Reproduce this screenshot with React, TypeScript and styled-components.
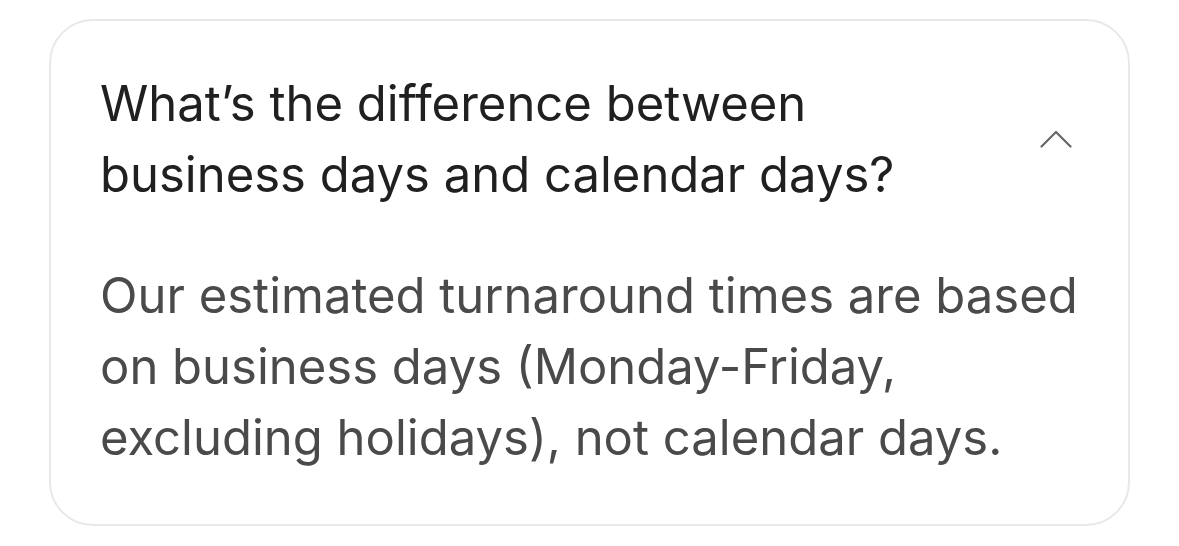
import React from "react";
import styled, { createGlobalStyle } from "styled-components";

const Global = createGlobalStyle`
  html, body { margin: 0; padding: 0; background: #ffffff; }
  body { font-family: Inter, "Noto Sans", sans-serif; }
`;

const Page = styled.div`
  padding: 19px 49px 20px 49px;
  box-sizing: border-box;
  width: 1179px;
  height: 546px;
`;

const Card = styled.section`
  box-sizing: border-box;
  height: 507px;
  border: 2px solid #e8e8e8;
  border-radius: 44px;
  background: #fff;
  padding: 47px 50px 0 49px;
  display: flex;
  flex-direction: column;
  gap: 50px;
`;

const Header = styled.div`
  display: flex;
  align-items: center;
  justify-content: space-between;
`;

const Question = styled.h3`
  margin: 0;
  font-size: 49px;
  line-height: 71px;
  font-weight: 400;
  color: #202020;
  white-space: nowrap;
`;

const Chevron = styled.svg`
  width: 32px;
  height: 18px;
  margin-right: 6px;
  flex-shrink: 0;
`;

const Answer = styled.p`
  margin: 0;
  font-size: 49px;
  line-height: 71px;
  color: #4a4a4a;
  white-space: nowrap;
`;

export default function App() {
  return (
    <>
      <Global />
      <Page>
        <Card>
          <Header>
            <Question>
              What’s the difference between
              <br />
              business days and calendar days?
            </Question>
            <Chevron viewBox="0 0 32 18" fill="none">
              <path d="M1.5 16.5 L16 2 L30.5 16.5" stroke="#666666" strokeWidth="2.2" strokeLinecap="round" strokeLinejoin="round" />
            </Chevron>
          </Header>
          <Answer>
            Our estimated turnaround times are based
            <br />
            on business days (Monday-Friday,
            <br />
            excluding holidays), not calendar days.
          </Answer>
        </Card>
      </Page>
    </>
  );
}
